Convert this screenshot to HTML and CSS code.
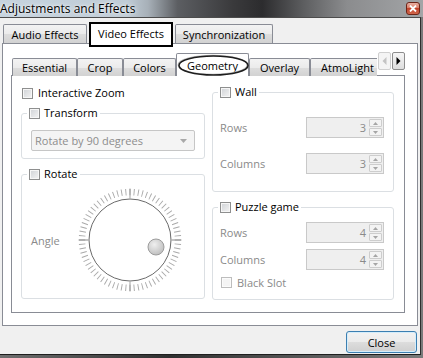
FILE: index.html
```html
<!DOCTYPE html>
<html>
<head>
<meta charset="utf-8">
<link rel="stylesheet" href="styles.css">
</head>
<body>
<div class="window">
  <div class="titlebar">
    <span class="title">Adjustments and Effects</span>
    <span class="close-x"><svg width="8" height="7" viewBox="0 0 8 7"><path d="M1 0.5 L7 6.5 M7 0.5 L1 6.5" stroke="#fff" stroke-width="1.8"/></svg></span>
  </div>
  <div class="body">
    <div class="tabbar outer">
      <div class="tab w-audio">Audio Effects</div>
      <div class="tab selected annotated w-video">Video Effects</div>
      <div class="tab w-sync">Synchronization</div>
    </div>
    <div class="pane outer-pane">
      <div class="tabbar inner">
        <div class="tabs-clip">
          <div class="tab w-ess">Essential</div>
          <div class="tab w-crop">Crop</div>
          <div class="tab w-colors">Colors</div>
          <div class="tab selected circled w-geo">Geometry<svg class="ellipse" width="73" height="23" viewBox="0 0 73 23"><ellipse cx="36.5" cy="11.5" rx="34.5" ry="9.5" fill="none" stroke="#bdbdbd" stroke-width="1.4" transform="translate(-0.8,-0.6)"/><ellipse cx="36.5" cy="11.5" rx="34.5" ry="9.5" fill="none" stroke="#1e1e1e" stroke-width="1.6"/></svg></div>
          <div class="tab w-over">Overlay</div>
          <div class="tab w-atmo">AtmoLight</div>
        </div>
        <div class="scroll-btn disabled"><svg width="5" height="8" viewBox="0 0 5 8"><path d="M4.5 0 L0.5 4 L4.5 8 Z" fill="#c3c3c3"/></svg></div>
        <div class="scroll-btn"><svg width="5" height="8" viewBox="0 0 5 8"><path d="M0.5 0 L4.5 4 L0.5 8 Z" fill="#000"/></svg></div>
      </div>
      <div class="pane inner-pane">
        <div class="col col-left">
          <label class="check-row first"><span class="cb"></span><span>Interactive Zoom</span></label>
          <fieldset class="group g-transform">
            <legend><span class="cb"></span><span>Transform</span></legend>
            <div class="group-body transform-body">
              <div class="combo"><span>Rotate by 90 degrees</span><svg width="7" height="4" viewBox="0 0 7 4"><path d="M0 0 L7 0 L3.5 4 Z" fill="#a8a8a8"/></svg></div>
            </div>
          </fieldset>
          <fieldset class="group g-rotate">
            <legend><span class="cb"></span><span>Rotate</span></legend>
            <div class="group-body rotate-body">
              <span class="muted angle-label">Angle</span>
              <svg class="dial" width="104" height="104" viewBox="0 0 104 104">
                <circle cx="52" cy="52" r="48" fill="none" stroke="#a9a9a9" stroke-width="6.5" pathLength="360" stroke-dasharray="1.1 3.9" stroke-dashoffset="0.55"/>
                <circle cx="52" cy="52" r="46.5" fill="none" stroke="#8c8c8c" stroke-width="9.5" pathLength="360" stroke-dasharray="1.1 88.9" stroke-dashoffset="0.55"/>
                <circle cx="52" cy="52" r="41" fill="#fff" stroke="#6a6a6a" stroke-width="1"/>
                <defs><radialGradient id="kn" cx="0.4" cy="0.35" r="0.7"><stop offset="0" stop-color="#efefef"/><stop offset="1" stop-color="#bdbdbd"/></radialGradient></defs>
                <circle cx="78" cy="59" r="8" fill="url(#kn)" stroke="#9c9c9c" stroke-width="1"/>
              </svg>
            </div>
          </fieldset>
        </div>
        <div class="col col-right">
          <fieldset class="group g-wall">
            <legend><span class="cb"></span><span>Wall</span></legend>
            <div class="group-body wall-body">
              <div class="field-row"><span class="muted">Rows</span><div class="spin"><span class="val">3</span><span class="spin-btns"><span class="sb"><svg width="5" height="3" viewBox="0 0 5 3"><path d="M0 3 L2.5 0 L5 3 Z" fill="#a5a5a5"/></svg></span><span class="sb"><svg width="5" height="3" viewBox="0 0 5 3"><path d="M0 0 L2.5 3 L5 0 Z" fill="#a5a5a5"/></svg></span></span></div></div>
              <div class="field-row gap15"><span class="muted">Columns</span><div class="spin"><span class="val">3</span><span class="spin-btns"><span class="sb"><svg width="5" height="3" viewBox="0 0 5 3"><path d="M0 3 L2.5 0 L5 3 Z" fill="#a5a5a5"/></svg></span><span class="sb"><svg width="5" height="3" viewBox="0 0 5 3"><path d="M0 0 L2.5 3 L5 0 Z" fill="#a5a5a5"/></svg></span></span></div></div>
            </div>
          </fieldset>
          <fieldset class="group g-puzzle">
            <legend><span class="cb"></span><span>Puzzle game</span></legend>
            <div class="group-body puzzle-body">
              <div class="field-row"><span class="muted">Rows</span><div class="spin"><span class="val">4</span><span class="spin-btns"><span class="sb"><svg width="5" height="3" viewBox="0 0 5 3"><path d="M0 3 L2.5 0 L5 3 Z" fill="#a5a5a5"/></svg></span><span class="sb"><svg width="5" height="3" viewBox="0 0 5 3"><path d="M0 0 L2.5 3 L5 0 Z" fill="#a5a5a5"/></svg></span></span></div></div>
              <div class="field-row gap6"><span class="muted">Columns</span><div class="spin"><span class="val">4</span><span class="spin-btns"><span class="sb"><svg width="5" height="3" viewBox="0 0 5 3"><path d="M0 3 L2.5 0 L5 3 Z" fill="#a5a5a5"/></svg></span><span class="sb"><svg width="5" height="3" viewBox="0 0 5 3"><path d="M0 0 L2.5 3 L5 0 Z" fill="#a5a5a5"/></svg></span></span></div></div>
              <label class="check-row black-slot"><span class="cb disabled"></span><span class="muted">Black Slot</span></label>
            </div>
          </fieldset>
        </div>
      </div>
    </div>
    <div class="footer"><button class="btn">Close</button></div>
  </div>
</div>
</body>
</html>
```

FILE: styles.css
```css
* { box-sizing: border-box; }
html, body { margin: 0; padding: 0; }
body {
  width: 423px;
  height: 358px;
  overflow: hidden;
  font-family: "Open Sans", "Noto Sans", sans-serif;
  font-size: 11px;
  color: #000;
  background: #3a3a3a;
}
.window {
  width: 423px;
  height: 358px;
  display: flex;
  flex-direction: column;
  background: linear-gradient(90deg, #6f6f6f 0%, #2f2f2f 40%, #4a4a4a 60%, #7a7a7a 100%);
}
.titlebar {
  height: 17px;
  flex: none;
  display: flex;
  align-items: center;
  justify-content: space-between;
  background: linear-gradient(90deg, #c6d3de 0%, #c0ccd6 30%, #a7b0b8 35%, #5c5e62 42%, #3a3a3c 55%, #2c2c2e 62%, #5e5f61 72%, #8b8c8e 82%, #a3a5a7 100%);
}
.title {
  font-size: 12px;
  line-height: 17px;
  color: #000;
  text-shadow: 0 0 5px rgba(255, 255, 255, 0.9), 0 0 2px rgba(255, 255, 255, 0.9);
}
.close-x {
  width: 14px;
  height: 13px;
  margin-right: 3px;
  border: 1px solid #6d2518;
  border-radius: 3px;
  background: linear-gradient(#eab1a4 0%, #d97a64 45%, #c2432b 50%, #d0674c 100%);
  display: flex;
  align-items: center;
  justify-content: center;
}
.body {
  width: 421px;
  height: 338px;
  flex: none;
  background: #f0f0f0;
  border-top: 1px solid #4c4c4c;
  border-right: 1px solid #2e2e2e;
  border-bottom: 1px solid #1e1e1e;
  padding: 4px 2px 0 2px;
  display: flex;
  flex-direction: column;
}

/* tabs */
.tabbar {
  display: flex;
  align-items: flex-end;
  flex: none;
}
.tabbar.outer {
  height: 21px;
  padding-left: 1px;
  gap: 2px;
}
.tab {
  height: 19px;
  border: 1px solid #898c95;
  border-bottom: none;
  border-radius: 2px 2px 0 0;
  background: linear-gradient(#f3f3f3 0%, #ebebeb 50%, #dddddd 51%, #d2d2d2 100%);
  display: flex;
  align-items: center;
  justify-content: center;
  white-space: nowrap;
  flex: none;
  position: relative;
}
.tab.selected {
  height: 22px;
  margin-bottom: -1px;
  background: #fff;
  z-index: 2;
}
.annotated::after {
  content: "";
  position: absolute;
  left: -1px;
  right: -1px;
  top: -1px;
  bottom: -3px;
  border: 2px solid #000;
}
.w-audio { width: 84px; }
.w-video { width: 84px; }
.w-sync { width: 98px; }

.pane {
  border: 1px solid #898c95;
  background: #fff;
}
.outer-pane {
  height: 283px;
  flex: none;
  display: flex;
  flex-direction: column;
  padding: 9px 0 0 8px;
}
.tabbar.inner {
  height: 22px;
  width: 394px;
}
.tabs-clip {
  display: flex;
  align-items: flex-end;
  width: 367px;
  height: 23px;
  margin-bottom: -1px;
  padding-left: 1px;
  overflow: hidden;
  position: relative;
  z-index: 2;
}
.tabs-clip .tab { height: 18px; }
.tabs-clip .tab.selected { height: 23px; margin-bottom: 0; }
.w-ess { width: 65px; }
.w-crop { width: 46px; }
.w-colors { width: 53px; }
.w-geo { width: 73px; }
.w-over { width: 61px; }
.w-atmo { width: 75px; }
.ellipse {
  position: absolute;
  left: 0;
  top: 0;
}
.scroll-btn {
  width: 13px;
  height: 18px;
  align-self: flex-start;
  margin-top: -1px;
  margin-left: 1px;
  border: 1px solid #8d8d8d;
  border-radius: 2px;
  background: linear-gradient(#f6f6f6, #dedede);
  display: flex;
  align-items: center;
  justify-content: center;
  flex: none;
}
.scroll-btn.disabled {
  border-color: #cfcfcf;
  background: #f4f4f4;
}

.inner-pane {
  width: 394px;
  height: 238px;
  display: flex;
  gap: 7px;
  padding: 9px 10px 0 9px;
}
.col { display: flex; flex-direction: column; }
.col-left { width: 184px; }
.col-right { width: 182px; }

.check-row {
  display: flex;
  align-items: center;
  gap: 5px;
  height: 14px;
  line-height: 14px;
}
.check-row.first { margin-top: 1px; padding-left: 1px; }
.cb {
  width: 11px;
  height: 11px;
  flex: none;
  border: 1px solid #8e8f8f;
  background: linear-gradient(135deg, #cfd2d6 0%, #f4f4f4 100%);
  box-shadow: inset 0 0 0 1px #f6f6f6;
}
.cb.disabled {
  border-color: #bdbdbd;
  background: #f4f4f4;
  box-shadow: inset 0 0 0 1px #fbfbfb;
}
.muted { color: #8a8a8a; }

.group {
  margin: 0;
  padding: 0;
  border: 1px solid #dbdfe3;
  border-radius: 3px;
  min-width: 0;
}
.group legend {
  display: flex;
  align-items: center;
  gap: 4px;
  margin-left: 5px;
  padding: 0 2px;
  height: 14px;
  line-height: 14px;
}
.g-transform { margin-top: 6px; }
.g-rotate { margin-top: 8px; }
.g-puzzle { margin-top: 8px; }
.group-body { padding: 0 9px; }
.transform-body { padding: 10px 9px 7px 9px; }
.rotate-body {
  padding: 7px 9px 6px 9px;
  display: flex;
  align-items: center;
}
.angle-label { width: 47px; flex: none; }
.dial { flex: none; display: block; }

.combo {
  height: 21px;
  border: 1px solid #c6c6c6;
  border-radius: 2px;
  background: #f4f4f4;
  color: #8d8d8d;
  display: flex;
  align-items: center;
  justify-content: space-between;
  padding: 0 7px 0 3px;
}

.wall-body { padding: 18px 9px 17px 7px; }
.puzzle-body { padding: 8px 9px 10px 7px; }
.field-row {
  height: 21px;
  display: flex;
  align-items: center;
  justify-content: space-between;
}
.gap15 { margin-top: 15px; }
.gap6 { margin-top: 6px; }
.spin {
  width: 78px;
  height: 21px;
  border: 1px solid #c9c9c9;
  background: #efefef;
  display: flex;
  align-items: stretch;
  justify-content: flex-end;
  padding: 1px;
}
.spin .val {
  color: #8a8a8a;
  align-self: center;
  padding-right: 3px;
}
.spin-btns {
  width: 13px;
  display: flex;
  flex-direction: column;
  gap: 1px;
}
.sb {
  flex: 1;
  border: 1px solid #cdcdcd;
  border-radius: 1px;
  background: #f3f3f3;
  display: flex;
  align-items: center;
  justify-content: center;
}
.black-slot { margin-top: 6px; height: 13px; padding-left: 1px; }

.footer {
  display: flex;
  justify-content: flex-end;
  padding: 5px 0 0 0;
}
.btn {
  width: 71px;
  height: 22px;
  margin-right: 1px;
  font-family: "Open Sans", "Noto Sans", sans-serif;
  font-size: 11px;
  color: #000;
  border: 1px solid #3c7fb1;
  border-radius: 3px;
  background: linear-gradient(#f2f2f2 0%, #ebebeb 50%, #dddddd 51%, #cfcfcf 100%);
  box-shadow: inset 0 0 0 1px #d4edfb;
  padding: 0;
}
```
